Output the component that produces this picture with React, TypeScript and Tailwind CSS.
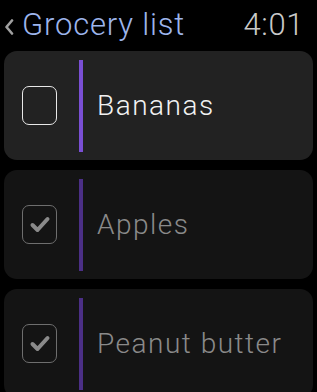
import React from "react";

type Item = { name: string; done: boolean };

const ITEMS: Item[] = [
  { name: "Bananas", done: false },
  { name: "Apples", done: true },
  { name: "Peanut butter", done: true },
];

function Check({ done }: { done: boolean }) {
  return (
    <div
      className={`flex h-[39px] w-[35px] shrink-0 items-center justify-center rounded-[7px] border-[1.5px] ${
        done ? "border-[#6e6e6e]" : "border-[#e8e8e8]"
      }`}
    >
      {done && (
        <svg width="22" height="19" viewBox="0 0 22 19" fill="none">
          <path
            d="M3.5 10 L8.5 15 L18.5 4"
            stroke="#8a8a8a"
            strokeWidth="4"
            strokeLinecap="round"
            strokeLinejoin="round"
          />
        </svg>
      )}
    </div>
  );
}

export default function App() {
  return (
    <div
      className="h-[392px] w-[317px] overflow-hidden bg-black"
      style={{ fontFamily: "Roboto, 'Noto Sans', sans-serif" }}
    >
      <div className="flex h-[51px] items-start justify-between pl-[4px] pr-[13px] pt-[5px]">
        <div className="flex items-center">
          <svg width="10" height="16" viewBox="0 0 10 16" className="mr-[8px] mt-[4px]" fill="none">
            <path d="M8 1.5 L2.5 8 L8 14.5" stroke="#a0a0a0" strokeWidth="2.6" strokeLinecap="round" strokeLinejoin="round" />
          </svg>
          <span className="text-[31px] font-light leading-[40px] tracking-[0.8px] text-[#9db5ec]">
            Grocery list
          </span>
        </div>
        <span className="text-[31px] font-light leading-[40px] tracking-[0.6px] text-[#c9c9c9]">4:01</span>
      </div>
      <div className="flex flex-col gap-[10px] px-[4px]">
        {ITEMS.map((it, i) => (
          <div
            key={it.name}
            className={`flex h-[109px] items-center rounded-[13px] pl-[18px] ${
              i === 0 ? "bg-[#222222]" : "bg-[#141414]"
            }`}
          >
            <Check done={it.done} />
            <div
              className={`ml-[22px] h-[92px] w-[4px] shrink-0 ${
                it.done ? "bg-[#4b2f86]" : "bg-[#7a4fd4]"
              }`}
            />
            <span
              className={`ml-[14px] text-[28px] font-light tracking-[1.5px] ${
                it.done ? "text-[#8a8a8a]" : "text-[#f2f2f2]"
              }`}
            >
              {it.name}
            </span>
          </div>
        ))}
      </div>
    </div>
  );
}
